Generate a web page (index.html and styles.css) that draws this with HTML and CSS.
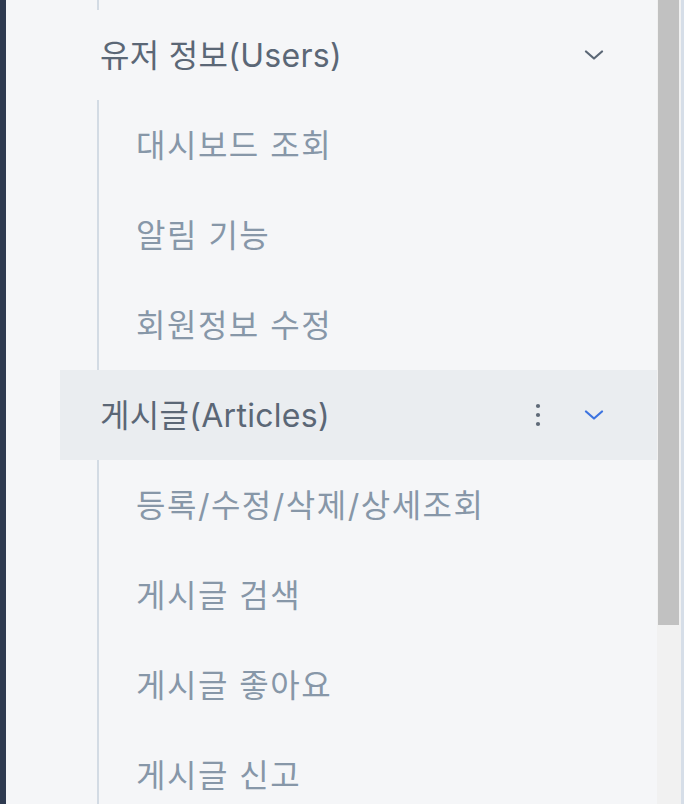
FILE: index.html
```html
<!DOCTYPE html>
<html lang="ko">
<head>
<meta charset="utf-8">
<link rel="stylesheet" href="styles.css">
</head>
<body>
<div class="frame">
  <div class="edge"></div>
  <nav class="sidebar">
    <div class="sub sub-tail"></div>
    <div class="group">
      <div class="head">
        <span class="label">유저 정보(Users)</span>
        <svg class="chev" viewBox="0 0 20 10" width="20" height="10"><path d="M2 1.5 L10 8.5 L18 1.5" fill="none" stroke="currentColor" stroke-width="2.2" stroke-linecap="round" stroke-linejoin="round"/></svg>
      </div>
      <ul class="sub">
        <li>대시보드 조회</li>
        <li>알림 기능</li>
        <li>회원정보 수정</li>
      </ul>
    </div>
    <div class="group">
      <div class="head active">
        <span class="label">게시글(Articles)</span>
        <svg class="kebab" viewBox="0 0 6 24" width="6" height="24"><circle cx="3" cy="3" r="2.1"/><circle cx="3" cy="12" r="2.1"/><circle cx="3" cy="21" r="2.1"/></svg>
        <svg class="chev" viewBox="0 0 20 10" width="20" height="10"><path d="M2 1.5 L10 8.5 L18 1.5" fill="none" stroke="currentColor" stroke-width="2.2" stroke-linecap="round" stroke-linejoin="round"/></svg>
      </div>
      <ul class="sub">
        <li>등록/수정/삭제/상세조회</li>
        <li>게시글 검색</li>
        <li>게시글 좋아요</li>
        <li>게시글 신고</li>
      </ul>
    </div>
  </nav>
  <div class="scrollbar"><div class="thumb"></div></div>
  <div class="edge-right"></div>
</div>
</body>
</html>
```
FILE: styles.css
```css
* { box-sizing: border-box; }
html, body { margin: 0; padding: 0; }
body {
  width: 684px;
  height: 804px;
  overflow: hidden;
  background: #f5f6f8;
  font-family: Inter, "Noto Sans CJK KR", sans-serif;
}
.frame {
  display: flex;
  height: 804px;
}
.edge {
  width: 6px;
  flex: none;
  background: #2e3a50;
}
.sidebar {
  flex: 1;
  background: #f5f6f8;
  padding-left: 54px;
  overflow: hidden;
}
.group { display: flex; flex-direction: column; }
.head {
  height: 90px;
  display: flex;
  align-items: center;
  padding-left: 40px;
  padding-right: 53px;
  color: #5b6776;
  font-size: 32px;
  letter-spacing: 0.3px;
}
.head .label { flex: 1; margin-bottom: 4px; }
.head.active { background: #eaedf0; }
.head .chev { color: #5b6776; display: block; }
.head.active .chev { color: #3d74e0; }
.kebab { fill: #5f6a78; margin-right: 43px; display: block; }
.sub {
  list-style: none;
  margin: 0 0 0 37px;
  padding: 0;
  border-left: 2px solid #d3dbe4;
}
.sub-tail { height: 10px; }
.sub li {
  height: 90px;
  display: flex;
  align-items: center;
  padding-left: 37px;
  padding-bottom: 5px;
  color: #8797a8;
  font-size: 32px;
  letter-spacing: 1.5px;
}
.scrollbar {
  width: 24px;
  flex: none;
  background: #f1f1f1;
  padding: 0 2px 0 1px;
}
.thumb {
  height: 625px;
  background: #c1c1c1;
}
.edge-right {
  width: 3px;
  flex: none;
  background: #d6dee8;
}
```
